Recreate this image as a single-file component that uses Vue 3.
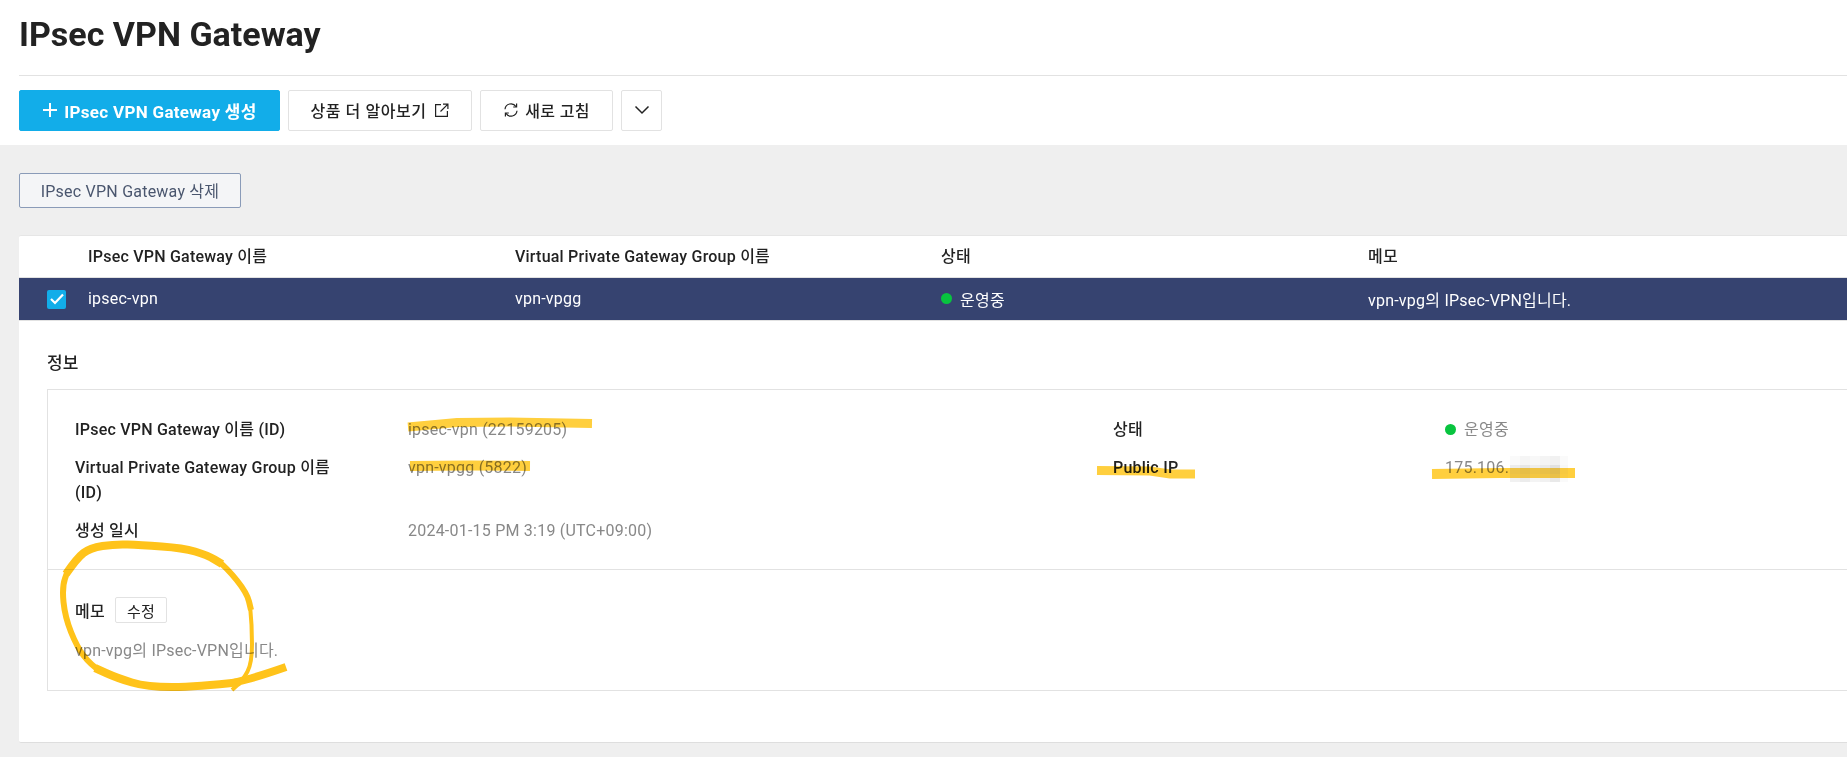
<script setup>
const columns = ['IPsec VPN Gateway 이름', 'Virtual Private Gateway Group 이름', '상태', '메모']
const blurCells = [
  [1510, 456, 10, 9, .04], [1520, 456, 10, 9, .07], [1530, 456, 10, 9, .05], [1540, 456, 10, 9, .08], [1550, 456, 10, 9, .1], [1560, 456, 8, 9, .04],
  [1510, 465, 10, 9, .14], [1520, 465, 10, 9, .18], [1530, 465, 10, 9, .12], [1540, 465, 10, 9, .16], [1550, 465, 10, 9, .22], [1560, 465, 8, 9, .06],
  [1510, 474, 10, 8, .1], [1520, 474, 10, 8, .14], [1530, 474, 10, 8, .08], [1540, 474, 10, 8, .1], [1550, 474, 10, 8, .16], [1560, 474, 8, 8, .04]
]

function smooth(p) {
  let d = `M${p[0][0]} ${p[0][1]}`
  for (let i = 1; i < p.length - 1; i++) {
    const mx = (p[i][0] + p[i + 1][0]) / 2
    const my = (p[i][1] + p[i + 1][1]) / 2
    d += ` Q${p[i][0]} ${p[i][1]} ${mx} ${my}`
  }
  const l = p[p.length - 1]
  return d + ` L${l[0]} ${l[1]}`
}

const strokes = [
  { w: 8, d: smooth([[286, 667], [260, 676], [233, 683]]) },
  { w: 8, d: smooth([[240, 682], [197, 687], [147, 687], [117, 678], [95, 668]]) },
  { w: 6, d: smooth([[100, 671], [90, 664], [77, 647], [65, 617], [62, 587], [68, 570]]) },
  { w: 8, d: smooth([[66, 574], [77, 558], [90, 548], [115, 544], [140, 545], [183, 548], [207, 555], [222, 564]]) },
  { w: 6, d: smooth([[218, 561], [227, 568], [247, 593], [251, 610]]) },
  { w: 4, d: smooth([[250, 605], [252, 625], [252, 663], [243, 680], [232, 690]]) }
]
</script>

<template>
  <div class="page">
    <header class="top">
      <h1 class="title">IPsec VPN Gateway</h1>
      <div class="toolbar">
        <button class="btn primary">
          <svg width="16" height="16" viewBox="0 0 16 16"><path d="M8 1v14M1 8h14" stroke="#fff" stroke-width="2" fill="none" /></svg>
          <span>IPsec VPN Gateway 생성</span>
        </button>
        <button class="btn learn">
          <span>상품 더 알아보기</span>
          <svg width="15" height="15" viewBox="0 0 15 15" fill="none" stroke="#222" stroke-width="1.2"><path d="M7 1.6H1.6v11.8h11.8V8" /><path d="M6.5 8.5 13.4 1.6M9 1.1h4.9V6" /></svg>
        </button>
        <button class="btn refresh">
          <svg width="16" height="16" viewBox="0 0 16 16" fill="none" stroke="#222" stroke-width="1.2"><path d="M2 7.2A6 6 0 0 1 13 4.6" /><path d="M13.6 1.6v3.4h-3.4" /><path d="M14 8.8A6 6 0 0 1 3 11.4" /><path d="M2.4 14.4V11h3.4" /></svg>
          <span>새로 고침</span>
        </button>
        <button class="btn more">
          <svg width="16" height="10" viewBox="0 0 16 10" fill="none" stroke="#222" stroke-width="1.5"><path d="M1.5 1.5 8 8l6.5-6.5" /></svg>
        </button>
      </div>
    </header>

    <main class="content">
      <button class="delete">IPsec VPN Gateway 삭제</button>

      <section class="card">
        <div class="grid head">
          <span></span>
          <span v-for="c in columns" :key="c">{{ c }}</span>
        </div>
        <div class="grid row">
          <span class="check">
            <svg width="14" height="12" viewBox="0 0 14 12" fill="none" stroke="#fff" stroke-width="2.2"><path d="M1 6 5 10 13 1.4" /></svg>
          </span>
          <span>ipsec-vpn</span>
          <span>vpn-vpgg</span>
          <span class="status"><i class="dot"></i>운영중</span>
          <span>vpn-vpg의 IPsec-VPN입니다.</span>
        </div>

        <div class="detail">
          <h2 class="section">정보</h2>
          <div class="panel">
            <div class="info">
              <div class="label">IPsec VPN Gateway 이름 (ID)</div>
              <div class="value">ipsec-vpn (22159205)</div>
              <div class="label">상태</div>
              <div class="value status"><i class="dot"></i>운영중</div>

              <div class="label">Virtual Private Gateway Group 이름 (ID)</div>
              <div class="value">vpn-vpgg (5822)</div>
              <div class="label">Public IP</div>
              <div class="value">175.106.</div>

              <div class="label">생성 일시</div>
              <div class="value">2024-01-15 PM 3:19 (UTC+09:00)</div>
            </div>
            <div class="memo">
              <div class="memo-head">
                <strong>메모</strong>
                <button class="edit">수정</button>
              </div>
              <p class="memo-text">vpn-vpg의 IPsec-VPN입니다.</p>
            </div>
          </div>
        </div>
      </section>
    </main>

    <svg class="marks" width="1847" height="757" viewBox="0 0 1847 757" fill="none">
      <g stroke="#ffcf3e">
        <path stroke-width="9" d="M408 427 430 425 457 422.5 510 422 592 423.5" />
        <path stroke-width="10" d="M410 466 470 465.5 530 466" />
        <path stroke-width="9" d="M1097 470.5 1150 471 1170 474 1195 474" />
        <path stroke-width="10" d="M1432 474 1500 473 1575 473" />
      </g>
      <rect v-for="(b, i) in blurCells" :key="i" :x="b[0]" :y="b[1]" :width="b[2]" :height="b[3]" fill="#777" :fill-opacity="b[4]" />
      <g stroke="#ffc31a" stroke-linejoin="round">
        <path v-for="(s, i) in strokes" :key="i" :d="s.d" :stroke-width="s.w" />
      </g>
    </svg>
  </div>
</template>

<style scoped>
.page {
  position: relative;
  width: 1847px;
  height: 757px;
  overflow: hidden;
  background: #fff;
  font-family: Roboto, "Noto Sans CJK KR", sans-serif;
  font-size: 16px;
  letter-spacing: .22px;
  color: #222;
}
.top {
  height: 145px;
  box-sizing: border-box;
  padding-left: 19px;
}
.title {
  margin: 0;
  height: 76px;
  box-sizing: border-box;
  border-bottom: 1px solid #e2e2e2;
  padding-top: 13px;
  font-size: 34px;
  line-height: 42px;
  letter-spacing: 0;
  font-weight: 700;
  color: #222;
}
.toolbar {
  display: flex;
  gap: 8px;
  margin-top: 14px;
}
button {
  font-family: inherit;
  cursor: pointer;
}
.btn {
  display: flex;
  align-items: center;
  justify-content: center;
  height: 41px;
  box-sizing: border-box;
  border: 1px solid #e2e2e2;
  border-radius: 2px;
  background: #fff;
  font-size: 16px;
  letter-spacing: .3px;
  font-weight: 500;
  color: #222;
  padding: 0 0 1px;
}
.primary {
  width: 261px;
  gap: 6px;
  border-color: #12ade9;
  background: #12ade9;
  color: #fff;
  font-size: 17px;
  font-weight: 700;
}
.learn { width: 184px; gap: 8px; letter-spacing: .55px; }
.refresh { width: 133px; gap: 6px; }
.more { width: 41px; }
.content {
  height: 612px;
  box-sizing: border-box;
  padding: 28px 0 0 19px;
  background: #efefef;
}
.delete {
  display: block;
  width: 222px;
  height: 35px;
  padding: 0 0 2px;
  border: 1px solid #8a9bb8;
  border-radius: 2px;
  background: #f4f5f7;
  font-size: 16px;
  letter-spacing: .22px;
  color: #4a566e;
}
.card {
  margin-top: 27px;
  height: 508px;
  box-sizing: border-box;
  background: #fff;
  border-top: 1px solid #e6e6e6;
  border-bottom: 1px solid #dedede;
  border-radius: 2px 0 0 2px;
}
.grid {
  display: grid;
  grid-template-columns: 69px 427px 426px 427px 1fr;
  align-items: center;
}
.head {
  height: 42px;
  box-sizing: border-box;
  padding-bottom: 3px;
  font-weight: 500;
  border-bottom: 1px solid #e2e2e2;
}
.row {
  height: 43px;
  box-sizing: border-box;
  padding-bottom: 1px;
  background: #364370;
  color: #fff;
  border-bottom: 1px solid #e2e2e2;
}
.check {
  display: flex;
  align-items: center;
  justify-content: center;
  width: 19px;
  height: 19px;
  margin-left: 28px;
  margin-top: 1px;
  border-radius: 2px;
  background: #12ade9;
}
.status {
  display: flex;
  align-items: center;
}
.dot {
  width: 11px;
  height: 11px;
  margin-right: 8px;
  border-radius: 50%;
  background: #08c43f;
}
.detail {
  padding: 30px 0 0 28px;
}
.section {
  margin: 0;
  font-size: 17px;
  line-height: 24px;
  font-weight: 500;
  color: #222;
}
.panel {
  margin-top: 14px;
  height: 302px;
  box-sizing: border-box;
  border: 1px solid #e2e2e2;
  border-right: 0;
}
.info {
  display: grid;
  grid-template-columns: 333px 705px 332px 1fr;
  align-content: start;
  row-gap: 13px;
  height: 180px;
  box-sizing: border-box;
  padding: 27px 0 0 27px;
  border-bottom: 1px solid #e2e2e2;
}
.label {
  padding-right: 60px;
  font-weight: 500;
  line-height: 25px;
}
.value {
  line-height: 25px;
  color: #888;
}
.memo {
  padding: 27px 0 0 27px;
}
.memo-head {
  display: flex;
  align-items: center;
  gap: 10px;
  height: 26px;
}
.memo-head strong {
  font-weight: 500;
}
.edit {
  width: 52px;
  height: 26px;
  padding: 0;
  border: 1px solid #e2e2e2;
  border-radius: 2px;
  background: #fff;
  font-size: 15px;
  color: #222;
}
.memo-text {
  margin: 16px 0 0;
  line-height: 24px;
  color: #888;
}
.marks {
  position: absolute;
  left: 0;
  top: 0;
  pointer-events: none;
  mix-blend-mode: multiply;
}
</style>
